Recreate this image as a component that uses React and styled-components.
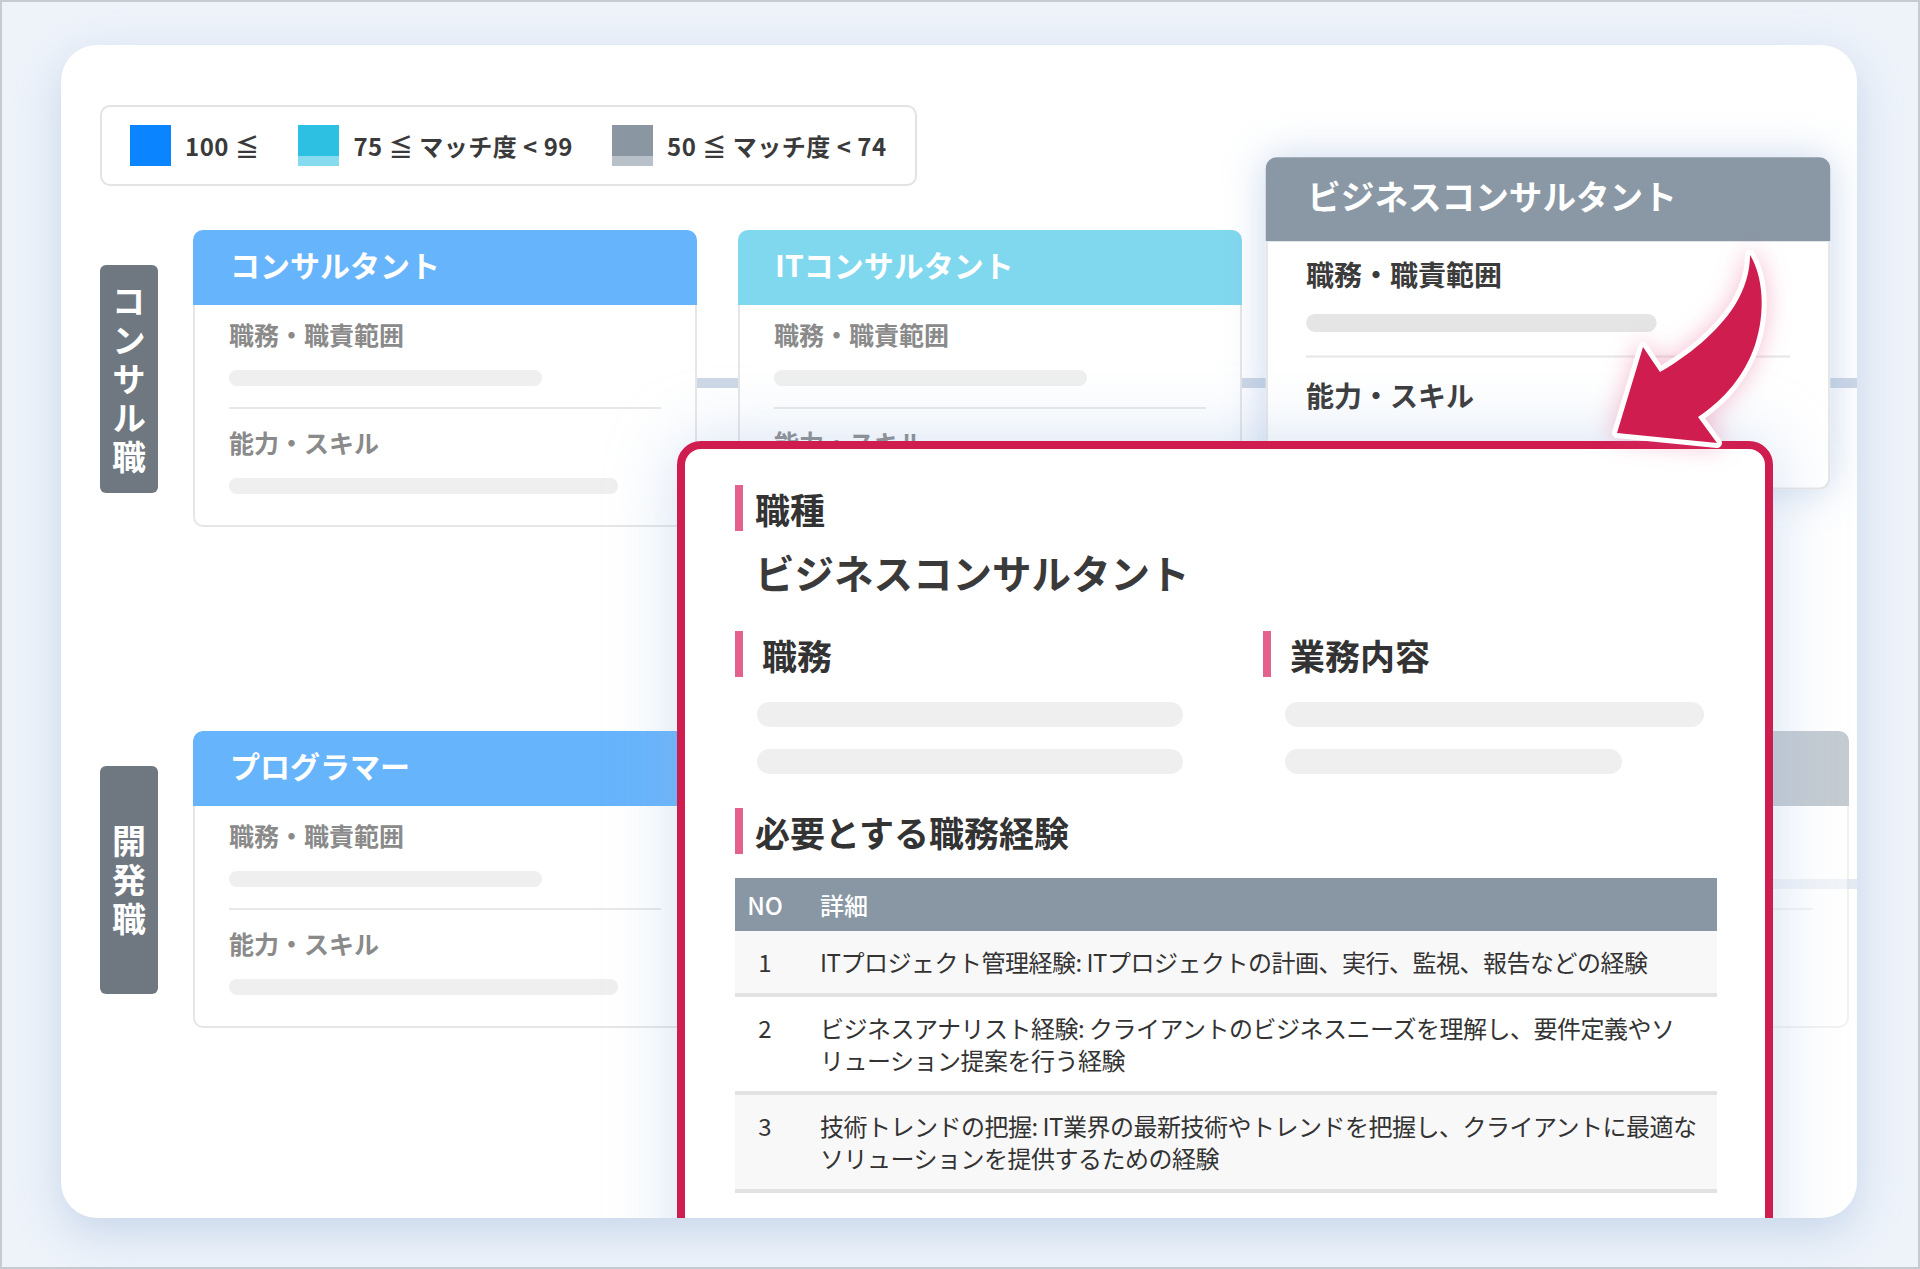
import styled, { createGlobalStyle, css } from "styled-components";

const GlobalStyle = createGlobalStyle`
	html, body {
		margin: 0;
		padding: 0;
	}
	body {
		font-family: "Noto Sans CJK JP", "Noto Sans", sans-serif;
		color: #333;
		background: #eef3fa;
	}
`;

const Frame = styled.div`
	box-sizing: border-box;
	width: 1920px;
	height: 1269px;
	border: 2px solid #c6cbd2;
	background: #eef3fa;
	padding: 43px 61px 49px 59px;
`;

const Sheet = styled.div`
	position: relative;
	box-sizing: border-box;
	height: 100%;
	background: #fff;
	border-radius: 36px;
	box-shadow: 0 14px 44px rgba(150, 178, 215, 0.45);
	overflow: hidden;
	padding: 60px 0 0 39px;
`;

const Legend = styled.div`
	box-sizing: border-box;
	display: flex;
	align-items: center;
	gap: 39px;
	width: 817px;
	height: 81px;
	padding: 0 0 0 28px;
	border: 2px solid #e3e3e3;
	border-radius: 10px;
`;

const LegendItem = styled.div`
	flex-shrink: 0;
	display: flex;
	align-items: center;
	gap: 14px;
	white-space: nowrap;
	font-size: 24px;
	letter-spacing: 0.5px;
	font-weight: 700;
	color: #3a3a3a;
`;

const Swatch = styled.span`
	width: 41px;
	height: 41px;
	background: ${p => p.$bg};
`;

const Board = styled.div`
	display: flex;
	flex-direction: column;
	gap: 204px;
	margin-top: 44px;
`;

const Row = styled.div`
	display: grid;
	grid-template-columns: 58px 1fr;
	column-gap: 35px;
	align-items: center;
`;

const RowLabel = styled.div`
	display: flex;
	align-items: center;
	justify-content: center;
	height: 228px;
	background: #6f7880;
	border-radius: 6px;
	color: #fff;
	font-size: 34px;
	font-weight: 700;
	span {
		writing-mode: vertical-rl;
		letter-spacing: 5px;
		margin-top: 5px;
	}
`;

const Track = styled.div`
	display: flex;
	gap: ${p => p.$gap}px;
	background: linear-gradient(${p => p.$line}, ${p => p.$line}) no-repeat 0 148px / 100% 10px;
`;

const Card = styled.div`
	flex: 0 0 504px;
	display: flex;
	flex-direction: column;
	border-radius: 10px;
	background: #fff;
	${p => p.$lifted && css`
		position: relative;
		z-index: 1;
		transform: translate(13px, -55px) scale(1.12);
		box-shadow: 0 0 36px rgba(140, 170, 215, 0.45);
	`}
	${p => p.$faded && css`
		opacity: 0.5;
	`}
`;

const CardHead = styled.div`
	box-sizing: border-box;
	height: 75px;
	display: flex;
	align-items: center;
	padding: 0 0 7px 37px;
	background: ${p => p.$bg};
	border-radius: 10px 10px 0 0;
	color: #fff;
	font-size: 30px;
	font-weight: 700;
`;

const CardBody = styled.div`
	display: flex;
	flex-direction: column;
	border: 2px solid #e6e6e6;
	border-top: none;
	border-radius: 0 0 10px 10px;
	padding: 14px 34px 31px 34px;
`;

const CardLabel = styled.div`
	font-size: 25px;
	line-height: 30px;
	font-weight: 700;
	color: ${p => (p.$dark ? "#3b3b3b" : "#8a8a8a")};
`;

const Skeleton = styled.div`
	height: ${p => p.$h}px;
	width: ${p => p.$w}px;
	border-radius: 999px;
	background: ${p => p.$bg || "#efefef"};
`;

const Divider = styled.hr`
	margin: 21px 0 18px;
	border: none;
	border-top: 2px solid #e8e8e8;
`;

const Modal = styled.div`
	position: absolute;
	z-index: 2;
	left: 616px;
	top: 396px;
	box-sizing: border-box;
	width: 1096px;
	height: 880px;
	padding: 36px 40px 0 50px;
	border: 8px solid #cf1d50;
	border-radius: 24px;
	background: #fff;
	box-shadow: 0 0 70px rgba(150, 180, 225, 0.4);
`;

const Heading = styled.h3`
	display: flex;
	align-items: center;
	gap: ${p => p.$gap || 12}px;
	margin: ${p => p.$mt || 0}px 0 0;
	height: 46px;
	font-size: 35px;
	font-weight: 700;
	color: #333;
	&::before {
		content: "";
		flex: 0 0 8px;
		height: 46px;
		background: #e2628c;
	}
`;

const JobTitle = styled.div`
	margin: 15px 0 0 20px;
	font-size: 39.5px;
	line-height: 52px;
	font-weight: 700;
	color: #3a3a3a;
`;

const Columns = styled.div`
	display: grid;
	grid-template-columns: 1fr 1fr;
	column-gap: 66px;
	margin-top: 33px;
`;

const Column = styled.div`
	display: flex;
	flex-direction: column;
	gap: 22px;
	& > div {
		margin-left: 22px;
	}
	& > h3 {
		margin-bottom: 3px;
	}
`;

const Table = styled.div`
	margin-top: 24px;
	width: 982px;
`;

const TRow = styled.div`
	display: grid;
	grid-template-columns: 60px 1fr;
	background: ${p => p.$bg};
	font-size: 24px;
	${p => p.$head ? css`
		height: 53px;
		align-items: center;
		color: #fff;
		font-weight: 500;
	` : css`
		border-bottom: 4px solid #e2e2e2;
		line-height: 32px;
		color: #333;
	`}
`;

const TNo = styled.div`
	text-align: center;
	padding: ${p => (p.$head ? "0" : "15px 0")};
`;

const TText = styled.div`
	line-break: strict;
	letter-spacing: ${p => (p.$head ? "0" : "-0.5px")};
	padding: ${p => (p.$head ? "0 12px 0 25px" : "15px 12px 15px 25px")};
`;

// keeps a kana together with the small kana / long vowel mark after it
const NoBreak = styled.span`
	white-space: nowrap;
`;

const Arrow = styled.svg`
	position: absolute;
	z-index: 3;
	left: 1539px;
	top: 195px;
	width: 190px;
	height: 220px;
	overflow: visible;
	filter: drop-shadow(0 0 12px rgba(230, 70, 120, 0.35));
`;

const LEGEND = [
	{ bg: "#0b84ff", text: "100 ≦" },
	{ bg: "linear-gradient(#2dc0e2 0 76%, #87dbef 76%)", text: "75 ≦ マッチ度 < 99" },
	{ bg: "linear-gradient(#8a96a2 0 76%, #b8c1ca 76%)", text: "50 ≦ マッチ度 < 74" },
];

const EXPERIENCE = [
	"ITプロジェクト管理経験: ITプロジェクトの計画、実行、監視、報告などの経験",
	"ビジネスアナリスト経験: クライアントのビジネスニーズを理解し、要件定義やソリューション提案を行う経験",
	"技術トレンドの把握: IT業界の最新技術やトレンドを把握し、クライアントに最適なソリューションを提供するための経験",
];

function kinsoku(text) {
	return text.split(/(.[ァィゥェォッャュョヮー]+)/).map((part, i) =>
		i % 2 ? <NoBreak key={i}>{part}</NoBreak> : part
	);
}

function JobCard({ title, color, lifted, faded }) {
	return <Card $lifted={lifted} $faded={faded}>
		<CardHead $bg={color}>{title}</CardHead>
		<CardBody>
			<CardLabel $dark={lifted}>職務・職責範囲</CardLabel>
			<Skeleton $h={16} $w={313} $bg={lifted ? "#e5e5e5" : undefined} style={{ marginTop: 21 }} />
			<Divider />
			<CardLabel $dark={lifted}>能力・スキル</CardLabel>
			{!lifted && <Skeleton $h={16} $w={389} style={{ marginTop: 21 }} />}
			{lifted && <div style={{ height: 37 }} />}
		</CardBody>
	</Card>;
}

export default function App() {
	return <>
		<GlobalStyle />
		<Frame>
			<Sheet>
				<Legend>
					{LEGEND.map(l => (
						<LegendItem key={l.text}>
							<Swatch $bg={l.bg} />
							{l.text}
						</LegendItem>
					))}
				</Legend>

				<Board>
					<Row>
						<RowLabel><span>コンサル職</span></RowLabel>
						<Track $gap={41} $line="#cdd8e6">
							<JobCard title="コンサルタント" color="#66b4fc" />
							<JobCard title="ITコンサルタント" color="#80d8ee" />
							<JobCard title="ビジネスコンサルタント" color="#8a98a5" lifted />
						</Track>
					</Row>
					<Row>
						<RowLabel><span>開発職</span></RowLabel>
						<Track $gap={72} $line="#e4eaf2">
							<JobCard title="プログラマー" color="#66b4fc" />
							<JobCard title="システムエンジニア" color="#80d8ee" />
							<JobCard title="インフラエンジニア" color="#8a98a5" faded />
						</Track>
					</Row>
				</Board>

				<Modal>
					<Heading>職種</Heading>
					<JobTitle>ビジネスコンサルタント</JobTitle>
					<Columns>
						<Column>
							<Heading $gap={19}>職務</Heading>
							<Skeleton $h={25} $w={426} />
							<Skeleton $h={25} $w={426} />
						</Column>
						<Column>
							<Heading $gap={19}>業務内容</Heading>
							<Skeleton $h={25} $w={419} />
							<Skeleton $h={25} $w={337} />
						</Column>
					</Columns>
					<Heading $mt={34}>必要とする職務経験</Heading>
					<Table>
						<TRow $head $bg="#8997a4">
							<TNo $head>NO</TNo>
							<TText $head>詳細</TText>
						</TRow>
						{EXPERIENCE.map((t, i) => (
							<TRow key={i} $bg={i % 2 === 0 ? "#f8f8f8" : "#fff"}>
								<TNo>{i + 1}</TNo>
								<TText>{kinsoku(t)}</TText>
							</TRow>
						))}
					</Table>
				</Modal>

				<Arrow viewBox="0 0 190 220">
					<path
						d="M150,15 C163,36 166,72 155,105 C145,135 124,160 98,177 L117,203 L17,193 L43,107 L60,132 C88,116 118,92 135,65 C145,48 150,32 150,15 Z"
						fill="#cf1d50"
						stroke="#fff"
						strokeWidth="10"
						strokeLinejoin="round"
						paintOrder="stroke"
					/>
				</Arrow>
			</Sheet>
		</Frame>
	</>;
}
